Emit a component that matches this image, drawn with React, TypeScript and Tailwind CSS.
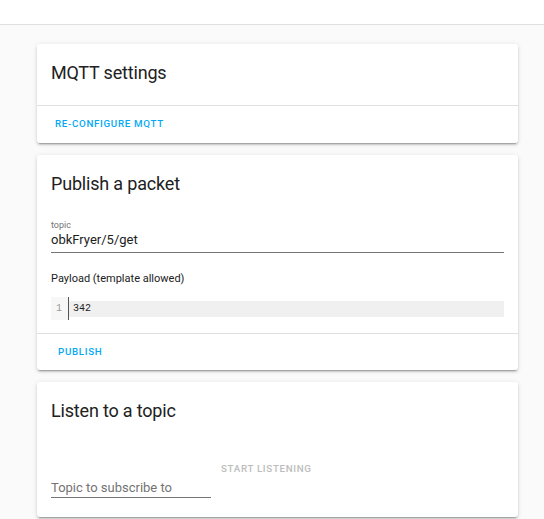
import React from 'react';

const card =
  'bg-white rounded-[3px] shadow-[0_2px_2px_0_rgba(0,0,0,0.14),0_1px_5px_0_rgba(0,0,0,0.12),0_3px_1px_-2px_rgba(0,0,0,0.2)]';

function CardTitle({ children }: { children: React.ReactNode }) {
  return (
    <div className="px-[14px] pt-[17px] text-[18px] leading-[24px] text-[#212121] tracking-[-0.01em]">
      {children}
    </div>
  );
}

function ActionButton({ children, disabled }: { children: React.ReactNode; disabled?: boolean }) {
  return (
    <span
      className={
        'text-[9.75px] font-medium uppercase tracking-[0.07em] ' +
        (disabled ? 'text-[#bdbdbd]' : 'text-[#03a9f4]')
      }
    >
      {children}
    </span>
  );
}

export default function App() {
  return (
    <div className="min-h-screen bg-[#fafafa]" style={{ fontFamily: 'Roboto, "Noto Sans", sans-serif' }}>
      {/* Top bar */}
      <div className="h-[25px] bg-white border-b border-[#e0e0e0]" />

      <div className="ml-[37px] w-[481px] pt-[19px] flex flex-col gap-3">
        {/* MQTT settings */}
        <div className={card}>
          <CardTitle>MQTT settings</CardTitle>
          <div className="h-[20px]" />
          <div className="border-t border-[#e0e0e0] h-[38px] flex items-center pl-[18px]">
            <ActionButton>Re-configure MQTT</ActionButton>
          </div>
        </div>

        {/* Publish a packet */}
        <div className={card}>
          <CardTitle>Publish a packet</CardTitle>
          <div className="px-[14px] pt-[23px] pb-[13px]">
            <div className="border-b border-[#757575]">
              <div className="h-[12px] leading-[12px] text-[9px] text-[#737373]">topic</div>
              <div className="h-[18px] leading-[18px] text-[13px] text-[#212121] mb-[3px]">obkFryer/5/get</div>
            </div>
            <div className="mt-[18px] h-[16px] leading-[16px] text-[11px] text-[#212121]">
              Payload (template allowed)
            </div>
            <div className="mt-[10px] h-[23px] flex">
              <div
                className="w-[17px] bg-[#f7f7f7] flex items-center justify-end pr-[6px] text-[10px] text-[#999]"
                style={{ fontFamily: '"Liberation Mono", monospace' }}
              >
                1
              </div>
              <div className="w-px bg-[#555]" />
              <div className="flex-1 flex items-center">
                <div
                  className="w-full h-[16px] bg-[#f0f0f0] pl-[4px] leading-[16px] text-[10px] text-[#222]"
                  style={{ fontFamily: '"Liberation Mono", monospace' }}
                >
                  342
                </div>
              </div>
            </div>
          </div>
          <div className="border-t border-[#e0e0e0] h-[37px] flex items-center pl-[21px]">
            <ActionButton>Publish</ActionButton>
          </div>
        </div>

        {/* Listen to a topic */}
        <div className={card}>
          <CardTitle>Listen to a topic</CardTitle>
          <div className="px-[14px] pt-[32px] pb-[19px] flex items-start">
            <div className="w-[160px] border-b border-[#757575]">
              <div className="h-[24px]" />
              <div className="h-[18px] leading-[18px] text-[13px] text-[#737373]">Topic to subscribe to</div>
            </div>
            <div className="ml-[10px] h-[28px] flex items-center">
              <ActionButton disabled>Start listening</ActionButton>
            </div>
          </div>
        </div>
      </div>
    </div>
  );
}
